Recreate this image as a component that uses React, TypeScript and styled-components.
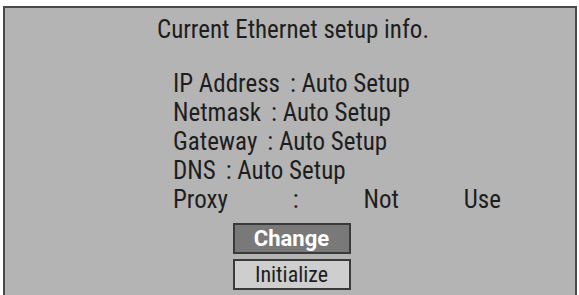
import React from "react";
import styled, { createGlobalStyle } from "styled-components";

const Global = createGlobalStyle`
  html, body { margin: 0; padding: 0; background: #ffffff; }
  body { overflow: hidden; }
`;

const Screen = styled.div`
  height: 295px;
  padding: 6px 2px 0 3px;
  box-sizing: border-box;
`;

const Panel = styled.div`
  height: 100%;
  box-sizing: border-box;
  background: #b4b4b4;
  border: 2px solid #4a4a4a;
  border-bottom: none;
  padding-top: 7px;
  display: flex;
  flex-direction: column;
  font-family: Roboto, "Liberation Sans", sans-serif;
  font-stretch: condensed;
  color: #1e1e1e;
`;

const Title = styled.div`
  font-size: 25px;
  line-height: 30px;
  text-align: center;
  padding-left: 6px;
`;

const InfoList = styled.div`
  margin-top: 24px;
  padding-left: 168px;
  display: flex;
  flex-direction: column;
`;

const Row = styled.div<{ $spread?: boolean }>`
  font-size: 25px;
  line-height: 29px;
  white-space: nowrap;
  display: flex;
  width: ${(p) => (p.$spread ? "328px" : "auto")};
  justify-content: ${(p) => (p.$spread ? "space-between" : "flex-start")};
`;

const Label = styled.span`
  margin-right: 10px;
`;

const Buttons = styled.div`
  margin-top: 9px;
  display: flex;
  flex-direction: column;
  align-items: center;
  gap: 5px;
  padding-left: 3px;
`;

const Button = styled.button<{ $active?: boolean }>`
  width: 118px;
  height: 31px;
  box-sizing: border-box;
  border: 2px solid #3a3a3a;
  background: ${(p) => (p.$active ? "#797979" : "#cecece")};
  color: ${(p) => (p.$active ? "#ffffff" : "#1e1e1e")};
  font-family: Roboto, "Liberation Sans", sans-serif;
  font-stretch: ${(p) => (p.$active ? "90%" : "condensed")};
  font-weight: ${(p) => (p.$active ? 700 : 400)};
  font-size: 22px;
  line-height: 26px;
  padding: 0;
  cursor: pointer;
`;

const rows = [
  { label: "IP Address", value: ": Auto Setup" },
  { label: "Netmask", value: ": Auto Setup" },
  { label: "Gateway", value: ": Auto Setup" },
  { label: "DNS", value: ": Auto Setup" },
];

export default function App() {
  return (
    <Screen>
      <Global />
      <Panel>
        <Title>Current Ethernet setup info.</Title>
        <InfoList>
          {rows.map((r) => (
            <Row key={r.label}>
              <Label>{r.label}</Label>
              <span>{r.value}</span>
            </Row>
          ))}
          <Row $spread>
            <span>Proxy</span>
            <span>:</span>
            <span>Not</span>
            <span>Use</span>
          </Row>
        </InfoList>
        <Buttons>
          <Button $active>Change</Button>
          <Button>Initialize</Button>
        </Buttons>
      </Panel>
    </Screen>
  );
}
